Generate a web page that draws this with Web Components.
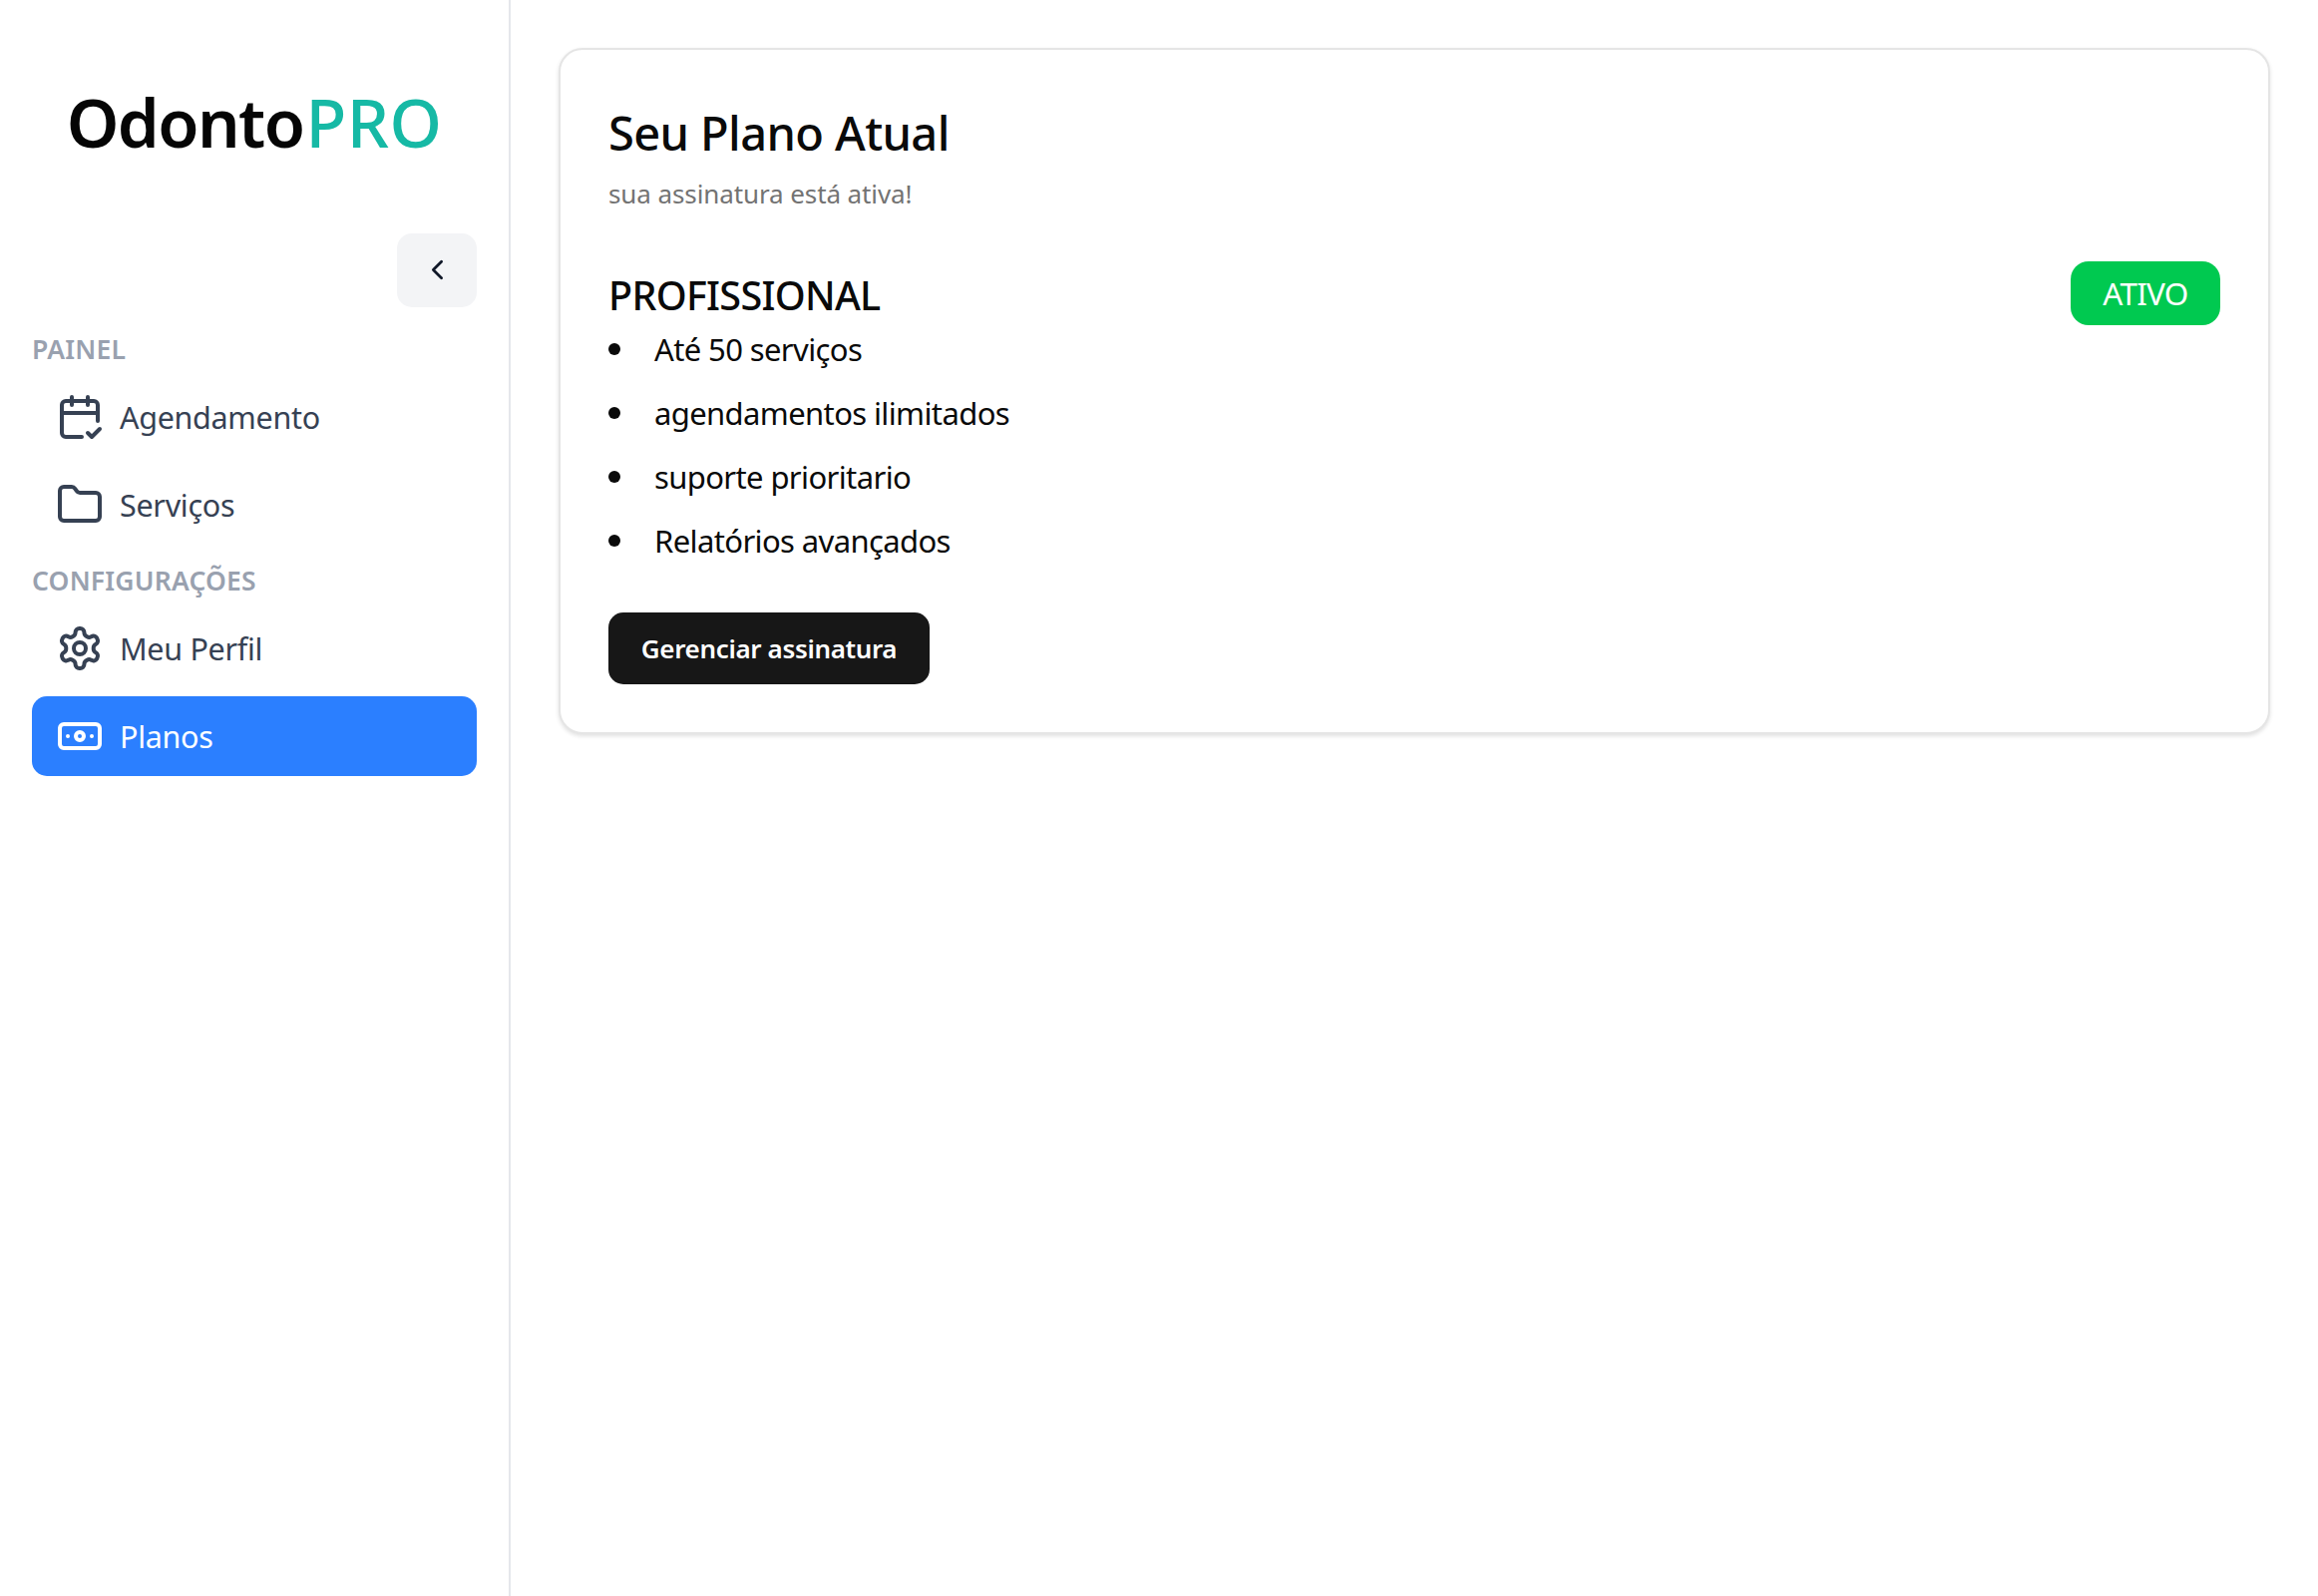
<!doctype html><html lang="pt"><head><meta charset="utf-8"><title>OdontoPRO</title>
<style>html,body{margin:0;height:100%;background:#fff}body{font-family:"Noto Sans","Open Sans",sans-serif}</style></head><body>
<app-shell>
  <app-sidebar slot="side">
    <brand-logo></brand-logo>
    <collapse-button></collapse-button>
    <nav-group label="PAINEL">
      <nav-item icon="calendar">Agendamento</nav-item>
      <nav-item icon="folder">Serviços</nav-item>
    </nav-group>
    <nav-group label="CONFIGURAÇÕES">
      <nav-item icon="settings">Meu Perfil</nav-item>
      <nav-item icon="banknote" active>Planos</nav-item>
    </nav-group>
  </app-sidebar>
  <plan-card>
    <plan-features>
      <li>Até 50 serviços</li><li>agendamentos ilimitados</li><li>suporte prioritario</li><li>Relatórios avançados</li>
    </plan-features>
  </plan-card>
</app-shell>
<script>
const def=(name,css,html)=>customElements.define(name,class extends HTMLElement{
  constructor(){super();this.attachShadow({mode:'open'}).innerHTML='<style>'+css+'</style>'+html}
});
const ICONS={
 calendar:'<path d="M8 2v4M16 2v4M21 14V6a2 2 0 0 0-2-2H5a2 2 0 0 0-2 2v14a2 2 0 0 0 2 2h8M3 10h18M16 20l2 2 4-4"/>',
 folder:'<path d="M20 20a2 2 0 0 0 2-2V8a2 2 0 0 0-2-2h-7.9a2 2 0 0 1-1.69-.9L9.6 3.9A2 2 0 0 0 7.93 3H4a2 2 0 0 0-2 2v13a2 2 0 0 0 2 2Z"/>',
 settings:'<path d="M12.22 2h-.44a2 2 0 0 0-2 2v.18a2 2 0 0 1-1 1.73l-.43.25a2 2 0 0 1-2 0l-.15-.08a2 2 0 0 0-2.73.73l-.22.38a2 2 0 0 0 .73 2.73l.15.1a2 2 0 0 1 1 1.72v.51a2 2 0 0 1-1 1.74l-.15.09a2 2 0 0 0-.73 2.73l.22.38a2 2 0 0 0 2.73.73l.15-.08a2 2 0 0 1 2 0l.43.25a2 2 0 0 1 1 1.73V20a2 2 0 0 0 2 2h.44a2 2 0 0 0 2-2v-.18a2 2 0 0 1 1-1.73l.43-.25a2 2 0 0 1 2 0l.15.08a2 2 0 0 0 2.73-.73l.22-.39a2 2 0 0 0-.73-2.73l-.15-.08a2 2 0 0 1-1-1.74v-.5a2 2 0 0 1 1-1.74l.15-.09a2 2 0 0 0 .73-2.73l-.22-.38a2 2 0 0 0-2.73-.73l-.15.08a2 2 0 0 1-2 0l-.43-.25a2 2 0 0 1-1-1.73V4a2 2 0 0 0-2-2z"/><circle cx="12" cy="12" r="3"/>',
 banknote:'<rect x="2" y="6" width="20" height="12" rx="2"/><circle cx="12" cy="12" r="2"/><path d="M6 12h.01M18 12h.01"/>',
 chevron:'<path d="m15 18-6-6 6-6"/>'
};
const svg=(n,s)=>`<svg width="${s}" height="${s}" viewBox="0 0 24 24" fill="none" stroke="currentColor" stroke-width="2" stroke-linecap="round" stroke-linejoin="round" aria-hidden="true">${ICONS[n]}</svg>`;

def('app-shell',':host{display:flex;min-height:100vh;align-items:stretch}main{flex:1;min-width:0;padding:48px;box-sizing:border-box}',
 '<slot name="side"></slot><main><slot></slot></main>');
def('app-sidebar',':host{display:flex;flex-direction:column;box-sizing:border-box;width:512px;flex:none;padding:0 32px;border-right:2px solid #e5e7eb}','<slot></slot>');
def('brand-logo',':host{display:block;height:234px;padding-top:80px;box-sizing:border-box;text-align:center;font:650 67px/84px "Noto Sans",sans-serif;color:#050505;white-space:nowrap;filter:blur(.45px)}.a{letter-spacing:-1.6px}.b{color:#16b9a5;font-weight:550;margin-left:2px;letter-spacing:.4px}',
 '<span class="a">Odonto</span><span class="b">PRO</span>');
def('collapse-button',':host{display:flex;justify-content:flex-end;margin-bottom:22px}button{width:80px;height:74px;border:0;padding:0;border-radius:15px;background:#f3f4f6;color:#101828;display:flex;align-items:center;justify-content:center}svg{margin-top:-1px}',
 '<button aria-label="Recolher">'+svg('chevron',33)+'</button>');
def('nav-group',':host{display:flex;flex-direction:column;gap:8px;margin-bottom:16px}.l{font:600 26.5px/40px "Noto Sans",sans-serif;letter-spacing:.2px;color:#99a1af}',
 '<div class="l"></div><slot></slot>');
def('nav-item',':host{display:flex;align-items:center;gap:16px;height:80px;box-sizing:border-box;padding:0 24px;border-radius:15px;color:#364153;font:400 30.5px/40px "Noto Sans",sans-serif;letter-spacing:-.3px}:host([active]){background:#2b7fff;color:#fff}svg{flex:none;display:block}',
 '<span id="i" style="display:contents"></span><slot></slot>');
def('plan-card',`:host{display:block;box-sizing:border-box;background:#fff;border:2px solid #e5e5e5;border-radius:24px;padding:48px;box-shadow:0 2px 4px rgba(0,0,0,.12);color:#0a0a0a}
 h2{margin:7px 0 0;font:500 47px/56px "Noto Sans",sans-serif;letter-spacing:-.62px}
 p{margin:15px 0 0;font:400 26px/36px "Noto Sans",sans-serif;letter-spacing:-.1px;color:#737373}
 .row{display:flex;justify-content:space-between;align-items:flex-start;margin-top:50px}
 h3{margin:9px 0 0;font:500 39.5px/50px "Noto Sans",sans-serif;letter-spacing:-.7px}
 .badge{display:flex;align-items:center;justify-content:center;width:150px;height:64px;border-radius:18px;background:#00c950;color:#fff;font:400 31.5px/40px "Noto Sans",sans-serif;letter-spacing:-.8px}
 .list{display:block;margin-top:-8px}
 button{display:flex;align-items:center;justify-content:center;width:322px;height:72px;margin-top:40px;border:0;padding:0;border-radius:15px;background:#171717;color:#fff;font:600 26px/36px "Noto Sans",sans-serif;letter-spacing:-.35px}`,
 `<h2>Seu Plano Atual</h2><p>sua assinatura está ativa!</p>
  <div class="row"><h3>PROFISSIONAL</h3><span class="badge">ATIVO</span></div>
  <div class="list"><slot></slot></div>
  <button>Gerenciar assinatura</button>`);
def('plan-features',`:host{display:block}
 ::slotted(li){display:flex;align-items:center;gap:34px;height:64px;font:400 31px/40px "Noto Sans",sans-serif;letter-spacing:-.62px;color:#0a0a0a}
 ::slotted(li)::before{content:"";width:12px;height:12px;border-radius:50%;background:#0a0a0a;flex:none}`,'<slot></slot>');
document.querySelectorAll('nav-group').forEach(g=>g.shadowRoot.querySelector('.l').textContent=g.getAttribute('label'));
document.querySelectorAll('nav-item').forEach(n=>n.shadowRoot.getElementById('i').innerHTML=svg(n.getAttribute('icon'),48));
</script></body></html>
